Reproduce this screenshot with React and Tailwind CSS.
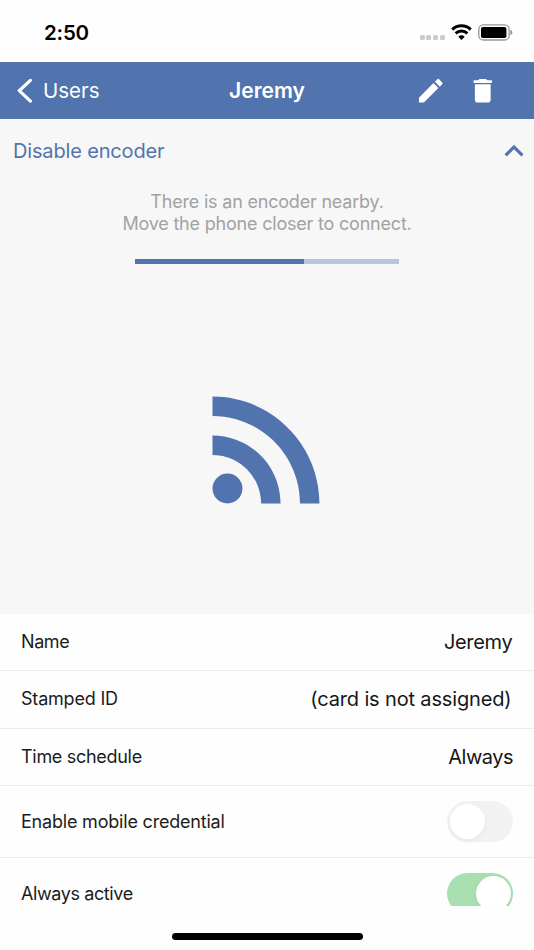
import React from 'react';
import { MdDelete, MdEdit, MdKeyboardArrowUp, MdRssFeed } from 'react-icons/md';

const StatusBar = () => (
  <div className="h-[62px] shrink-0 flex items-center justify-between pl-[44px] pr-[21.5px] pt-[3px]">
    <span className="text-[20.5px] leading-6 font-semibold text-black tracking-[-0.2px]">2:50</span>
    <div className="flex items-center">
      <div className="flex gap-[1.6px] mt-[9px] mr-[6px]">
        {[...Array(4)].map((_, i) => (
          <span key={i} className="size-[5px] rounded-[1.5px] bg-[#cbcbcb]" />
        ))}
      </div>
      <svg className="w-[21px] h-[16px] mr-[6px] -mt-px" viewBox="0 0 21 16" fill="none" stroke="#000">
        <path d="M1.3 5.6a13.2 13.2 0 0 1 18.4 0" strokeWidth="3" />
        <path d="M4.6 9.4a8.6 8.6 0 0 1 11.8 0" strokeWidth="2.9" />
        <path d="M10.5 15.9 7.3 12.7a4.7 4.7 0 0 1 6.4 0z" fill="#000" stroke="none" />
      </svg>
      <svg className="w-[35px] h-[17px] -mt-px" viewBox="0 0 35 17">
        <rect x="0.8" y="0.8" width="30.4" height="15.2" rx="4.6" fill="none" stroke="#969696" strokeWidth="1.3" />
        <rect x="3" y="3" width="25.4" height="11" rx="1.8" fill="#000" />
        <path d="M32.4 5.7c1.2.4 1.9 1.4 1.9 2.7s-.7 2.3-1.9 2.7z" fill="#969696" />
      </svg>
    </div>
  </div>
);

const Header = () => (
  <div className="h-[57px] shrink-0 bg-[#5173ae] text-white grid grid-cols-[1fr_auto_1fr] items-center">
    <button className="flex items-center pl-[17px]">
      <svg className="w-4 h-[26px]" viewBox="0 0 16 26" fill="none" stroke="currentColor" strokeWidth="3.2" strokeLinecap="round" strokeLinejoin="round">
        <path d="M13.4 2.4 2.2 12.7l11.2 10.4" />
      </svg>
      <span className="text-[20.5px] leading-6 ml-[10px]">Users</span>
    </button>
    <span className="text-[21px] leading-6 font-semibold">Jeremy</span>
    <div className="flex items-center justify-end gap-5 pr-9">
      <MdEdit className="size-[31.5px]" />
      <MdDelete className="size-[31.5px]" />
    </div>
  </div>
);

const EncoderPanel = () => (
  <div className="h-[494.5px] shrink-0 bg-[#f7f7f7] flex flex-col items-center">
    <div className="w-full h-16 flex items-center justify-between pl-[13px] pr-px text-[#5173ae]">
      <span className="text-[20px] leading-6 tracking-[-0.16px]">Disable encoder</span>
      <MdKeyboardArrowUp className="size-[38px]" />
    </div>
    <p className="mt-2 text-center text-[18px] leading-[22px] tracking-[-0.2px] text-[#a2a2a2]">
      There is an encoder nearby.
      <br />
      Move the phone closer to connect.
    </p>
    <div className="mt-6 w-[264px] h-[5px] bg-[#b8c4e0]">
      <div className="h-full w-[64%] bg-[#5173ae]" />
    </div>
    <MdRssFeed className="mt-[102px] size-[165px] text-[#5173ae]" />
  </div>
);

const Row = ({ label, className, labelClass = 'tracking-[-0.2px]', children }) => (
  <div className={`shrink-0 flex items-center justify-between pl-[21px] pr-[21px] border-b border-[#ececec] ${className}`}>
    <span className={`text-[18px] leading-6 text-[#1c1c1c] ${labelClass}`}>{label}</span>
    {children}
  </div>
);

const Value = ({ className = 'tracking-[-0.2px] mr-px', children }) => (
  <span className={`text-[20px] leading-6 text-[#161616] ${className}`}>{children}</span>
);

const Toggle = ({ on }) => (
  <div className={`w-[66px] h-[40.5px] rounded-full p-[2.5px] flex items-center ${on ? 'bg-[#a8dfb0] justify-end' : 'bg-[#f2f2f3] justify-start'}`}>
    <div className="size-[35px] rounded-full bg-white shadow-[0_2px_5px_rgba(0,0,0,0.05)]" />
  </div>
);

export default function App() {
  return (
    <div className="w-[534px] h-[950px] overflow-hidden bg-[#fefefe] flex flex-col font-['Inter',sans-serif]">
      <StatusBar />
      <Header />
      <EncoderPanel />
      <div className="h-[292.5px] shrink-0 overflow-hidden flex flex-col">
        <Row label="Name" className="h-[57.5px]" labelClass="tracking-[-0.4px]">
          <Value className="tracking-[-0.3px] mr-[0.5px]">Jeremy</Value>
        </Row>
        <Row label="Stamped ID" className="h-[57.5px]">
          <Value className="tracking-[-0.15px] mr-[1.5px]">(card is not assigned)</Value>
        </Row>
        <Row label="Time schedule" className="h-[57.5px]" labelClass="tracking-[-0.3px]">
          <Value className="tracking-[-0.5px]">Always</Value>
        </Row>
        <Row label="Enable mobile credential" className="h-[72px]">
          <Toggle />
        </Row>
        <Row label="Always active" className="h-[72px]" labelClass="tracking-[-0.4px]">
          <Toggle on />
        </Row>
      </div>
      <div className="flex-1 flex justify-center pt-[27px]">
        <div className="w-[191px] h-[7px] rounded-full bg-black" />
      </div>
    </div>
  );
}
